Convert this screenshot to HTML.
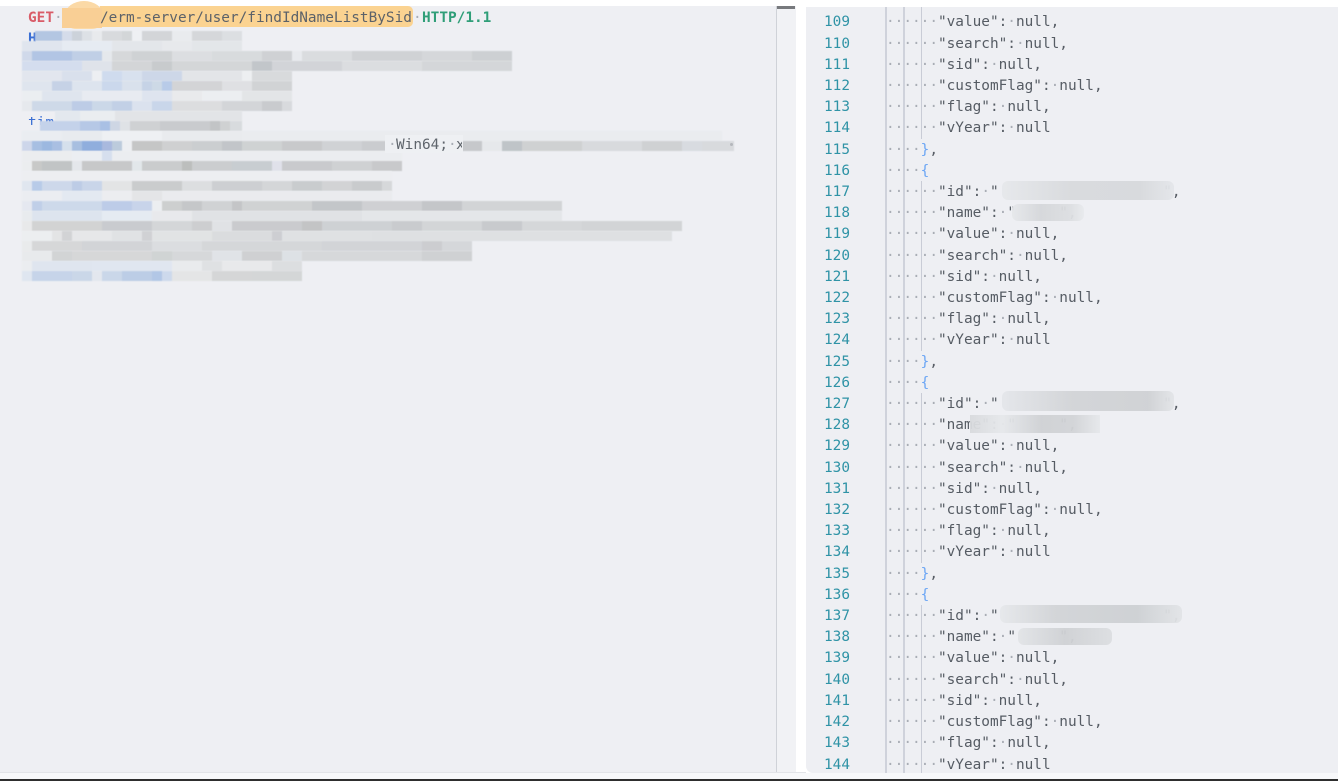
<!DOCTYPE html>
<html><head><meta charset="utf-8"><style>
html,body{margin:0;padding:0;width:1338px;height:781px;overflow:hidden;background:#fff}
body{position:relative;font-family:"DejaVu Sans Mono","Liberation Mono",monospace}
div,pre{position:absolute;margin:0}
.l{left:22px;height:10px;filter:blur(.5px)}
pre{font:14.4px/21.2px "DejaVu Sans Mono","Liberation Mono",monospace;white-space:pre}
i{font-style:normal;color:#a9adb5}
#code{left:886px;top:12.4px;color:#565c64}
#num{left:810px;width:40px;top:12.4px;text-align:right;color:#2f93a6}
b.o{color:#6aa5f5;font-weight:400}
.g{width:2px;background:#cfd2db}
.t{width:1px;background:#c9ccd6;left:921px}
.p{background:#d9dbdf;opacity:.95;border-radius:6px}
.tx{font:14.4px/21px "DejaVu Sans Mono","Liberation Mono",monospace;white-space:pre}
</style></head><body>
<div style="left:0;top:6px;width:776px;height:766px;background:#eeeff3"></div>
<div style="left:776px;top:6px;width:1px;height:766px;background:#cfd2d8"></div>
<div style="left:777px;top:6px;width:19px;height:766px;background:#f1f2f5"></div>
<div style="left:777px;top:6px;width:18px;height:3px;background:#77797d"></div>
<div style="left:0;top:772px;width:806px;height:1px;background:#e2e4e8"></div>
<div style="left:0;top:773px;width:1338px;height:6px;background:#f7f8fa"></div>
<div style="left:0;top:779px;width:1338px;height:2px;background:#2e2e2e"></div>
<div style="left:806px;top:7px;width:532px;height:766px;background:#eeeff3;border-bottom-left-radius:7px"></div>

<div style="left:65px;top:1px;width:38px;height:28px;background:#fbd9a6;border-radius:50% 50% 30% 30%"></div>
<div style="left:100px;top:6px;width:313px;height:21px;background:#fbd391;border-radius:0 5px 5px 0"></div>
<div style="left:62px;top:8px;width:40px;height:20px;background:#f9cf95"></div>

<div class="tx" style="left:28px;top:8px;color:#d95c68;font-weight:700">GET</div>
<div class="tx" style="left:54px;top:8px;color:#a9adb5">·</div>
<div class="tx" style="left:100px;top:8px;color:#5c6269">/erm-server/user/findIdNameListBySid</div>
<div class="tx" style="left:413px;top:8px;color:#a9adb5">·</div>
<div class="tx" style="left:422px;top:8px;color:#2f9e78;font-weight:700">HTTP/1.1</div>
<div class="tx" style="left:28px;top:29px;color:#3b6fd4;font-weight:700">H</div>
<div class="tx" style="left:28px;top:113px;color:#3b6fd4;height:12px;overflow:hidden">tim</div>

<div class="l" style="left:35px;top:31px;width:207px;background:linear-gradient(90deg,#b3c6e2 0 27px,#d5dcea 27px 37px,#ccd2da 37px 47px,#dde1e6 47px 57px,#e8eaed 57px 67px,#d8dadd 67px 87px,#d3d6d8 87px 97px,#eef0f3 97px 107px,#d3d5d8 107px 137px,#e9ebee 137px 157px,#d5d7da 157px 187px,#dcdfe2 187px 207px)"></div>
<div class="l" style="top:41px;width:220px;background:linear-gradient(90deg,#e0e5ee 0 40px,#e6ebf2 40px 90px,#e3e6ea 90px 140px,#e7e9ec 140px 170px,#e3e6e9 170px 220px)"></div>
<div class="l" style="top:51px;width:490px;background:linear-gradient(90deg,#d0d9ea 0 10px,#b2c5e4 10px 50px,#c0cfe6 50px 80px,#e5e8ec 80px 90px,#d6d8da 90px 110px,#cfd2d4 110px 150px,#dcdee1 150px 190px,#d8dbdd 190px 240px,#cfd1d4 240px 270px,#e8eaee 270px 280px,#dadcdf 280px 330px,#d0d2d5 330px 400px,#d5d7da 400px 450px,#cdd0d3 450px 490px)"></div>
<div class="l" style="top:61px;width:490px;background:linear-gradient(90deg,#d4ddee 0 60px,#dfe3ea 60px 90px,#d3d5d7 90px 130px,#c8cbcd 130px 150px,#d4d6d8 150px 230px,#c2c6ca 230px 250px,#d2d4d8 250px 320px,#dbdde0 320px 400px,#d4d6d9 400px 490px)"></div>
<div class="l" style="top:71px;width:270px;background:linear-gradient(90deg,#e2e6ee 0 40px,#d9e0ec 40px 70px,#edeff2 70px 80px,#cfdbee 80px 100px,#d8e1ee 100px 120px,#cdd7e8 120px 160px,#e3e5e8 160px 220px,#edeff1 220px 230px,#d8dadc 230px 270px)"></div>
<div class="l" style="top:81px;width:270px;background:linear-gradient(90deg,#dfe5ee 0 30px,#c6d2e6 30px 50px,#dde4ee 50px 80px,#cbd8ec 80px 100px,#d9e1ec 100px 120px,#c6d3e6 120px 130px,#cdd9e6 130px 140px,#b8cbe8 140px 150px,#d3d4d6 150px 200px,#dfe0e3 200px 230px,#d1d3d5 230px 270px)"></div>
<div class="l" style="top:91px;width:270px;background:linear-gradient(90deg,#ebeef1 0 20px,#dfe5ee 20px 60px,#e8ebf1 60px 120px,#dee4ef 120px 150px,#e9eaec 150px 180px,#eceef1 180px 220px,#e3e5e7 220px 270px)"></div>
<div class="l" style="top:101px;width:270px;background:linear-gradient(90deg,#e6e9ed 0 10px,#ced9e8 10px 50px,#bdcce6 50px 70px,#cbd8e8 70px 90px,#c2d0e6 90px 110px,#dbe2ee 110px 130px,#c9d6ea 130px 150px,#dcdddf 150px 200px,#d3d5d8 200px 240px,#c9cbce 240px 260px,#d8dadd 260px 270px)"></div>
<div class="l" style="top:111px;left:55px;width:187px;background:linear-gradient(90deg,#e3e8ee 0 25px,#eaedf0 25px 60px,#e2e4e7 60px 187px)"></div>
<div class="l" style="top:121px;left:40px;width:202px;background:linear-gradient(90deg,#c4d2ea 0 40px,#b6c8e6 40px 60px,#a9c0e4 60px 70px,#ced6e4 70px 80px,#dfe2e6 80px 90px,#cfd1d3 90px 120px,#c9cbce 120px 170px,#c2c4c6 170px 180px,#cfd1d2 180px 190px,#d8dbde 190px 202px)"></div>
<div class="l" style="top:131px;width:700px;background:linear-gradient(90deg,#eaedf1 0 40px,#e8ebef 40px 80px,#eef0f3 80px 140px,#e9ebee 140px 220px,#eaecef 220px 700px)"></div>
<div class="l" style="top:141px;width:712px;background:linear-gradient(90deg,#cdd6ea 0 10px,#a7bfe2 10px 20px,#9cb8e0 20px 30px,#a9bfe2 30px 40px,#d5e0ec 40px 50px,#a8bfe0 50px 60px,#90aedd 60px 80px,#a9b9de 80px 90px,#bccbdc 90px 100px,#edeff2 100px 110px,#c5c6c6 110px 140px,#cfd0d1 140px 170px,#cbced0 170px 200px,#c2c5c9 200px 220px,#cfd2d3 220px 260px,#c8c9cb 260px 300px,#d0d2d5 300px 340px,#cacccf 340px 370px,#eeeff3 370px 440px,#c6c8cb 440px 460px,#e6e8eb 460px 480px,#bfc4c8 480px 500px,#cfd1d2 500px 560px,#d8dadd 560px 620px,#cfd1d3 620px 660px,#d8dbe0 660px 680px,#d8dadd 680px 712px)"></div>
<div class="l" style="top:151px;width:380px;background:linear-gradient(90deg,#ebedef 0 50px,#ebeef2 50px 80px,#d6dfee 80px 90px,#ebedf0 90px 380px)"></div>
<div class="l" style="top:161px;width:380px;background:linear-gradient(90deg,#ebedef 0 10px,#c8c9c8 10px 20px,#c1c4c5 20px 50px,#e4e7eb 50px 60px,#c7c8c9 60px 110px,#e2e7ea 110px 120px,#cacccd 120px 160px,#bcbebd 160px 170px,#cbcdcf 170px 210px,#c8cdd1 210px 250px,#e0e1ea 250px 260px,#c9cacd 260px 310px,#cfd1d3 310px 350px,#c8c9cb 350px 380px)"></div>
<div class="l" style="top:171px;width:370px;background:#edeef1"></div>
<div class="l" style="top:181px;width:370px;background:linear-gradient(90deg,#e0e6ef 0 10px,#b8cbe8 10px 20px,#cdd8ea 20px 50px,#bdcce6 50px 60px,#c9d5e9 60px 80px,#e3e4e5 80px 110px,#cacccd 110px 160px,#dcdee0 160px 190px,#cdcfd2 190px 240px,#d4d6d8 240px 270px,#c9ccce 270px 300px,#d2d3d5 300px 330px,#c9cbcd 330px 360px,#d6d8da 360px 370px)"></div>
<div class="l" style="top:191px;width:370px;background:linear-gradient(90deg,#ebedf1 0 40px,#e3e9f1 40px 80px,#ecedf0 80px 110px,#e4e5e7 110px 140px,#eaebee 140px 370px)"></div>
<div class="l" style="top:201px;width:540px;background:linear-gradient(90deg,#e5e8f0 0 10px,#c0cfe8 10px 20px,#cdd9ea 20px 80px,#bdcce8 80px 110px,#c8d4ea 110px 130px,#eceef1 130px 140px,#cdcfcf 140px 160px,#c5c7c9 160px 180px,#d0d2d4 180px 210px,#c4c5c7 210px 220px,#d0d2d3 220px 290px,#c3c6c9 290px 340px,#cfd0d3 340px 400px,#c4c6c9 400px 440px,#d2d4d6 440px 540px)"></div>
<div class="l" style="top:211px;width:540px;background:linear-gradient(90deg,#e8ebee 0 10px,#dde4ee 10px 80px,#e5ebf2 80px 130px,#e8e9ec 130px 170px,#e0e2e5 170px 340px,#e4e6e9 340px 540px)"></div>
<div class="l" style="top:221px;width:660px;background:linear-gradient(90deg,#e8e9ea 0 10px,#d2d3d3 10px 80px,#c9cbcf 80px 130px,#d4d6d8 130px 170px,#cdced0 170px 190px,#e0e2e5 190px 210px,#cacbce 210px 280px,#c3c4c5 280px 300px,#ced1d4 300px 370px,#c9cbce 370px 400px,#d3d5d7 400px 460px,#c8cacd 460px 500px,#d5d7d9 500px 560px,#d2d4d6 560px 660px)"></div>
<div class="l" style="top:231px;width:650px;background:linear-gradient(90deg,#eceef0 0 30px,#e3e4e5 30px 40px,#d2d3d5 40px 50px,#e6e7e9 50px 90px,#e0e2e4 90px 120px,#d0d1d4 120px 130px,#e1e3e4 130px 190px,#dadcde 190px 250px,#cdced2 250px 260px,#dfe1e3 260px 350px,#dee0e2 350px 650px)"></div>
<div class="l" style="top:241px;width:450px;background:linear-gradient(90deg,#e9ebec 0 10px,#d6d7d8 10px 60px,#d2d4d7 60px 130px,#dbdde0 130px 180px,#d5d7d9 180px 300px,#d2d4d7 300px 400px,#cccdd0 400px 420px,#d5d7da 420px 450px)"></div>
<div class="l" style="top:251px;width:450px;background:linear-gradient(90deg,#e8eaec 0 30px,#d2d4d5 30px 50px,#d6d7d8 50px 130px,#d0d4d4 130px 150px,#d6d8da 150px 190px,#e0e3e7 190px 220px,#cfd0d2 220px 260px,#dde1e5 260px 280px,#d6d8da 280px 400px,#cfd1d3 400px 450px)"></div>
<div class="l" style="top:261px;width:280px;background:linear-gradient(90deg,#ebedf0 0 10px,#dfe5ef 10px 70px,#e0e6f0 70px 150px,#e9ebed 150px 180px,#dfe1e3 180px 200px,#e8e9eb 200px 250px,#dcdee0 250px 280px)"></div>
<div class="l" style="top:271px;width:280px;background:linear-gradient(90deg,#dfe6f0 0 10px,#c6d4e9 10px 50px,#cad7e8 50px 70px,#e3e7ee 70px 80px,#cad7e9 80px 100px,#bccde6 100px 130px,#b2c7e6 130px 140px,#cdd9ec 140px 150px,#e4e5e6 150px 190px,#d5d6d7 190px 230px,#d4d6d7 230px 280px)"></div>

<div style="left:385px;top:135px;width:78px;height:18px;background:#eef0f3"></div>
<div class="tx" style="left:396px;top:135px;color:#5f656c">Win64;</div>
<div class="tx" style="left:388px;top:135px;color:#a9adb5">·</div>
<div class="tx" style="left:448px;top:135px;color:#a9adb5">·</div>
<div class="tx" style="left:456px;top:135px;color:#5f656c;width:6px;overflow:hidden">x</div>
<div style="left:730px;top:143px;width:3px;height:3px;background:#b4b7bc;border-radius:50%"></div>

<div class="g" style="left:885px;top:7px;height:766px"></div>
<div class="g" style="left:903px;top:7px;height:766px"></div>
<div class="t" style="top:7px;height:132px"></div>
<div class="t" style="top:181px;height:170px"></div>
<div class="t" style="top:393px;height:170px"></div>
<div class="t" style="top:605px;height:168px"></div>

<pre id="num">109
110
111
112
113
114
115
116
117
118
119
120
121
122
123
124
125
126
127
128
129
130
131
132
133
134
135
136
137
138
139
140
141
142
143
144</pre>
<pre id="code"><i>······</i>"value":<i>·</i>null,
<i>······</i>"search":<i>·</i>null,
<i>······</i>"sid":<i>·</i>null,
<i>······</i>"customFlag":<i>·</i>null,
<i>······</i>"flag":<i>·</i>null,
<i>······</i>"vYear":<i>·</i>null
<i>····</i><b class="o">}</b>,
<i>····</i><b class="o">{</b>
<i>······</i>"id":<i>·</i>"                   ",
<i>······</i>"name":<i>·</i>"     ",
<i>······</i>"value":<i>·</i>null,
<i>······</i>"search":<i>·</i>null,
<i>······</i>"sid":<i>·</i>null,
<i>······</i>"customFlag":<i>·</i>null,
<i>······</i>"flag":<i>·</i>null,
<i>······</i>"vYear":<i>·</i>null
<i>····</i><b class="o">}</b>,
<i>····</i><b class="o">{</b>
<i>······</i>"id":<i>·</i>"                   ",
<i>······</i>"name":<i>·</i>"     ",
<i>······</i>"value":<i>·</i>null,
<i>······</i>"search":<i>·</i>null,
<i>······</i>"sid":<i>·</i>null,
<i>······</i>"customFlag":<i>·</i>null,
<i>······</i>"flag":<i>·</i>null,
<i>······</i>"vYear":<i>·</i>null
<i>····</i><b class="o">}</b>,
<i>····</i><b class="o">{</b>
<i>······</i>"id":<i>·</i>"                   ",
<i>······</i>"name":<i>·</i>"     ",
<i>······</i>"value":<i>·</i>null,
<i>······</i>"search":<i>·</i>null,
<i>······</i>"sid":<i>·</i>null,
<i>······</i>"customFlag":<i>·</i>null,
<i>······</i>"flag":<i>·</i>null,
<i>······</i>"vYear":<i>·</i>null</pre>

<div class="p" style="left:1002px;top:181px;width:172px;height:19px;background:linear-gradient(90deg,#e6e8eb,#d8dadd 40%,#d7d9dc 80%,#e4e6ea)"></div>
<div class="p" style="left:1012px;top:204px;width:72px;height:17px;background:linear-gradient(90deg,#e6e8eb,#d5d7da 40%,#dcdee1 80%,#e8eaed)"></div>
<div class="p" style="left:1002px;top:391px;width:172px;height:20px;background:linear-gradient(90deg,#e4e6ea,#d2d4d7 40%,#cfd1d4 85%,#e3e5e8)"></div>
<div class="p" style="left:970px;top:415px;width:130px;height:18px;background:linear-gradient(90deg,#d8dadd,#e6e8eb 25%,#cfd1d4 55%,#d2d4d7 80%,#e6e8eb);border-radius:0"></div>
<div class="p" style="left:1000px;top:605px;width:182px;height:18px;background:linear-gradient(90deg,#e6e8eb,#d2d4d7 30%,#cdd0d3 75%,#e2e4e7)"></div>
<div class="p" style="left:1018px;top:628px;width:94px;height:17px;background:linear-gradient(90deg,#e2e4e7,#cfd1d4 50%,#dcdee1)"></div>
</body></html>
